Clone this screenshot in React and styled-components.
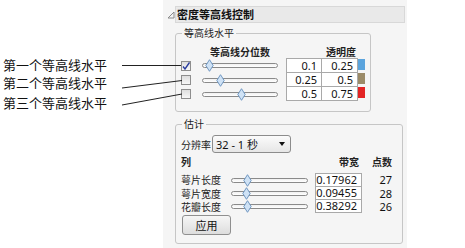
import styled, { createGlobalStyle } from "styled-components";

const Global = createGlobalStyle`
  html, body {
    margin: 0;
    padding: 0;
    background: #fff;
  }
  body {
    font-family: "Noto Sans", "Noto Sans CJK SC", sans-serif;
    color: #1a1a1a;
  }
`;

const Page = styled.div`
  position: relative;
  display: flex;
  width: 465px;
  height: 248px;
  overflow: hidden;
`;

const Callouts = styled.div`
  width: 163px;
  display: flex;
  flex-direction: column;
  padding-top: 56px;
  box-sizing: border-box;
`;

const CalloutLabel = styled.div`
  font-family: "Noto Sans CJK SC", sans-serif;
  font-size: 13px;
  line-height: 18px;
  height: 18px;
  padding-left: 3px;
  margin-top: ${(p) => p.$gap || 0}px;
  color: #111;
  white-space: nowrap;
`;

const Leaders = styled.svg`
  position: absolute;
  left: 0;
  top: 0;
  pointer-events: none;
`;

const Panel = styled.div`
  width: 244px;
  height: 248px;
  background: #f5f5f5;
  padding-top: 6px;
  box-sizing: border-box;
`;

const HeaderRow = styled.div`
  display: flex;
  align-items: center;
  height: 17px;
  padding-left: 4px;
`;

const Triangle = styled.svg`
  width: 8px;
  height: 8px;
  flex: none;
`;

const TitleBar = styled.div`
  flex: 1;
  height: 17px;
  margin-right: 2px;
  box-sizing: border-box;
  border: 1px solid #d8d8d8;
  background: #e9e9e9;
  font-family: "Noto Sans CJK SC", sans-serif;
  font-weight: 700;
  font-size: 11px;
  line-height: 15px;
  padding-left: 1px;
  color: #111;
`;

const Group = styled.fieldset`
  margin: ${(p) => p.$mt}px 0 0 12px;
  width: ${(p) => p.$w}px;
  box-sizing: border-box;
  border: 1px solid #c6c6c6;
  border-radius: 3px;
  padding: ${(p) => p.$pt}px 0 ${(p) => p.$pb}px 5px;
  min-width: 0;
`;

const Legend = styled.legend`
  padding: 0 2px;
  margin-left: 1px;
  font-family: "Noto Sans CJK SC", sans-serif;
  font-size: 10px;
  line-height: 12px;
  color: #222;
`;

const LevelGrid = styled.div`
  display: grid;
  grid-template-columns: 21px 84px 36px 36px 8px;
  align-items: center;
`;

const ColHead = styled.div`
  font-family: "Noto Sans CJK SC", sans-serif;
  font-weight: 700;
  font-size: 10px;
  line-height: 12px;
  height: 12px;
  color: #222;
  text-align: ${(p) => p.$align || "left"};
  padding-right: ${(p) => p.$pr || 0}px;
  margin-bottom: ${(p) => p.$mb || 0}px;
`;

const Check = styled.div`
  width: 10px;
  height: 10px;
  box-sizing: border-box;
  border: 1px solid #8e8e8e;
  background: linear-gradient(#dedede, #f7f7f7);
  display: flex;
  align-items: center;
  justify-content: center;
`;

const Track = styled.div`
  position: relative;
  width: ${(p) => p.$w}px;
  height: 5px;
  box-sizing: border-box;
  border: 1px solid #8a8a8a;
  border-radius: 3px;
  background: linear-gradient(#f0f0f0, #ffffff);
`;

const Thumb = styled.svg`
  position: absolute;
  top: -5px;
  width: 9px;
  height: 13px;
`;

const Cell = styled.div`
  height: ${(p) => p.$h}px;
  box-sizing: border-box;
  background: #fff;
  border-right: 1px solid #a9a9a9;
  border-bottom: 1px solid #a9a9a9;
  border-left: ${(p) => (p.$first ? "1px solid #a9a9a9" : "none")};
  border-top: ${(p) => (p.$top ? "1px solid #a9a9a9" : "none")};
  font-size: 11px;
  line-height: ${(p) => (p.$top ? p.$h - 2 : p.$h - 1)}px;
  text-align: right;
  padding-right: 4px;
  color: #111;
  align-self: stretch;
`;

const Swatch = styled.div`
  width: 7px;
  height: 11px;
  align-self: start;
  margin-top: ${(p) => (p.$top ? 1 : 0)}px;
  background: ${(p) => p.$color};
`;

const ResRow = styled.div`
  display: flex;
  align-items: center;
  height: 18px;
  margin-top: 5px;
`;

const ResLabel = styled.span`
  font-family: "Noto Sans CJK SC", sans-serif;
  font-size: 10px;
  width: 31px;
  color: #222;
`;

const Dropdown = styled.div`
  width: 79px;
  height: 18px;
  box-sizing: border-box;
  border: 1px solid #8c8c8c;
  border-radius: 3px;
  background: linear-gradient(#fbfbfb, #e6e6e6);
  display: flex;
  align-items: center;
  justify-content: space-between;
  padding: 0 5px 0 3px;
  font-family: "Noto Sans", "Noto Sans CJK SC", sans-serif;
  font-size: 11px;
  color: #111;
`;

const Caret = styled.span`
  width: 0;
  height: 0;
  border-left: 3px solid transparent;
  border-right: 3px solid transparent;
  border-top: 4px solid #111;
`;

const EstGrid = styled.div`
  display: grid;
  grid-template-columns: 50px 84px 47px 30px;
  align-items: center;
  margin-top: 3px;
`;

const RowLabel = styled.div`
  font-family: "Noto Sans CJK SC", sans-serif;
  font-size: 10px;
  line-height: 12px;
  color: #222;
`;

const Count = styled.div`
  font-size: 11px;
  line-height: 12px;
  text-align: right;
  color: #111;
`;

const Button = styled.button`
  display: block;
  margin-top: 2px;
  margin-left: 1px;
  width: 49px;
  height: 20px;
  box-sizing: border-box;
  border: 1px solid #8f8f8f;
  border-radius: 3px;
  background: linear-gradient(#f6f6f6, #dddddd);
  font-family: "Noto Sans CJK SC", sans-serif;
  font-size: 11px;
  color: #111;
  padding: 0;
`;

function Diamond({ x }) {
  return (
    <Thumb style={{ left: x - 5 }} viewBox="0 0 9 13">
      <path
        d="M4.5 0.7 L8.2 6.5 L4.5 12.3 L0.8 6.5 Z"
        fill="#cfe2f5"
        stroke="#7198c2"
        strokeWidth="1"
        strokeLinejoin="round"
      />
    </Thumb>
  );
}

const levels = [
  { checked: true, thumb: 7, q: "0.1", a: "0.25", color: "#5ba4dd" },
  { checked: false, thumb: 18, q: "0.25", a: "0.5", color: "#9b8b68" },
  { checked: false, thumb: 39, q: "0.5", a: "0.75", color: "#e32424" },
];

const columns = [
  { name: "萼片长度", bw: "0.17962", n: 27, thumb: 16 },
  { name: "萼片宽度", bw: "0.09455", n: 28, thumb: 15 },
  { name: "花瓣长度", bw: "0.38292", n: 26, thumb: 16 },
];

function LevelRow({ lv, top }) {
  const h = top ? 15 : 14;
  return (
    <>
      <Check>
        {lv.checked && (
          <svg width="8" height="8" viewBox="0 0 8 8">
            <path d="M1 4.5 L3 7 L7.5 0.5" fill="none" stroke="#2a3c9e" strokeWidth="1.4" />
          </svg>
        )}
      </Check>
      <Track $w={76}>
        <Diamond x={lv.thumb} />
      </Track>
      <Cell $h={h} $first $top={top}>{lv.q}</Cell>
      <Cell $h={h} $top={top}>{lv.a}</Cell>
      <Swatch $color={lv.color} $top={top} />
    </>
  );
}

function EstRow({ c, top }) {
  const h = top ? 14 : 13;
  return (
    <>
      <RowLabel>{c.name}</RowLabel>
      <Track $w={77}>
        <Diamond x={c.thumb} />
      </Track>
      <Cell $h={h} $first $top={top}>{c.bw}</Cell>
      <Count>{c.n}</Count>
    </>
  );
}

export default function App() {
  return (
    <>
      <Global />
      <Page>
        <Callouts>
          <CalloutLabel>第一个等高线水平</CalloutLabel>
          <CalloutLabel>第二个等高线水平</CalloutLabel>
          <CalloutLabel $gap={2}>第三个等高线水平</CalloutLabel>
        </Callouts>
        <Leaders width="465" height="248">
          <line x1="122" y1="65.5" x2="181" y2="65.5" stroke="#222" strokeWidth="1" />
          <line x1="122" y1="88" x2="182" y2="80.5" stroke="#222" strokeWidth="1" />
          <line x1="122" y1="105" x2="182" y2="94" stroke="#222" strokeWidth="1" />
        </Leaders>
        <Panel>
          <HeaderRow>
            <Triangle viewBox="0 0 8 8">
              <path d="M1 7 L7 7 L7 1 Z" fill="none" stroke="#8a8a8a" strokeWidth="1" />
            </Triangle>
            <TitleBar>密度等高线控制</TitleBar>
          </HeaderRow>

          <Group $mt={4} $w={196} $pt={7} $pb={10}>
            <Legend>等高线水平</Legend>
            <LevelGrid>
              <span />
              <ColHead $align="center" $pr={8}>等高线分位数</ColHead>
              <span />
              <ColHead $align="right" $pr={2}>透明度</ColHead>
              <span />
              {levels.map((lv, i) => (
                <LevelRow key={i} lv={lv} top={i === 0} />
              ))}
            </LevelGrid>
          </Group>

          <Group $mt={6} $w={228} $pt={0} $pb={8}>
            <Legend>估计</Legend>
            <ResRow>
              <ResLabel>分辨率</ResLabel>
              <Dropdown>
                <span>32 - 1 秒</span>
                <Caret />
              </Dropdown>
            </ResRow>
            <EstGrid>
              <ColHead $mb={5}>列</ColHead>
              <span />
              <ColHead $align="right" $pr={3} $mb={5}>带宽</ColHead>
              <ColHead $align="right" $mb={5}>点数</ColHead>
              {columns.map((c, i) => (
                <EstRow key={c.name} c={c} top={i === 0} />
              ))}
            </EstGrid>
            <Button>应用</Button>
          </Group>
        </Panel>
      </Page>
    </>
  );
}
